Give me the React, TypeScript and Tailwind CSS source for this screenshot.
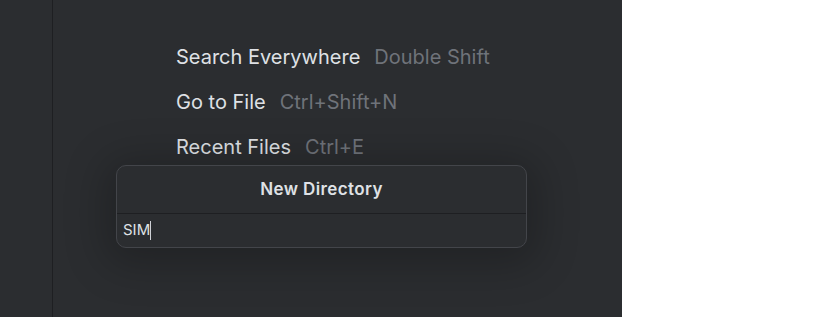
import React from 'react'

/**
 * One action hint on the empty editor screen
 */
interface HintProps {
  readonly label: string;
  readonly shortcut: string;
}

function Hint({ label, shortcut }: HintProps): React.JSX.Element {
  return (
    <div className="h-[45px] flex items-center gap-[14px] text-[20px]">
      <span className="text-[#dfe1e5]">{label}</span>
      <span className="text-[#6f737a]">{shortcut}</span>
    </div>
  )
}

export default function App(): React.JSX.Element {
  return (
    <div className="w-[825px] h-[317px] flex bg-white font-['Inter','Liberation_Sans',sans-serif]">
      {/* IDE frame */}
      <div className="relative w-[622px] h-full flex bg-[#2b2d30]">
        {/* Tool window strip */}
        <div className="w-[53px] h-full border-r border-[#1e1f22]" />

        {/* Empty editor */}
        <div className="flex-1 pl-[123px] pt-[34px] flex flex-col">
          <Hint label="Search Everywhere" shortcut="Double Shift" />
          <Hint label="Go to File" shortcut="Ctrl+Shift+N" />
          <Hint label="Recent Files" shortcut="Ctrl+E" />
        </div>

        {/* New Directory popup */}
        <div className="absolute left-[116px] top-[165px] w-[411px] h-[83px] flex flex-col rounded-[10px] border border-[#43454a] bg-[#2b2d30] shadow-[0_6px_40px_12px_rgba(0,0,0,0.22)]">
          <div className="h-[48px] flex items-center justify-center border-b border-[#1e1f22]">
            <span className="text-[17px] font-semibold tracking-[0.4px] text-[#dfe1e5]">New Directory</span>
          </div>
          <div className="flex-1 flex items-center pl-[6px]">
            <span className="text-[15px] text-[#dfe1e5]">SIM</span>
            <span className="w-px h-[19px] bg-[#ced0d6]" />
          </div>
        </div>
      </div>
    </div>
  )
}
